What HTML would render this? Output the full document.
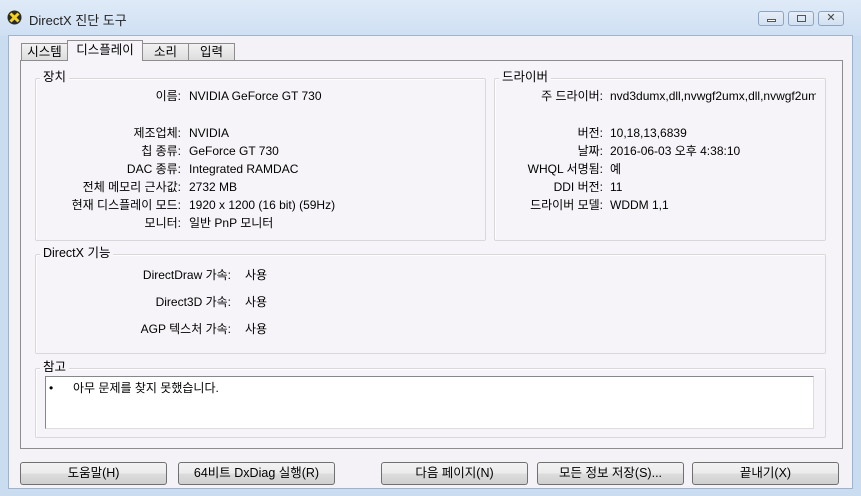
<!DOCTYPE html>
<html><head><meta charset="utf-8"><style>
*{margin:0;padding:0;box-sizing:border-box}
body{width:861px;height:496px;overflow:hidden;background:#c9dcf0;font-family:"Liberation Sans","Noto Sans CJK KR","NanumGothic",sans-serif;font-size:12px;color:#000;position:relative}
.a{position:absolute}
#title{left:0;top:0;width:861px;height:36px;background:linear-gradient(#dfeaf7,#cfe0f3);}
#client{left:8px;top:35px;width:845px;height:454px;background:#f4f2f7;border:1px solid #9fb3cc}
.tab{position:absolute;top:43px;height:18px;border:1px solid #8d8d8d;border-bottom:none;background:linear-gradient(#f2f2f2,#dcdcdc);text-align:center;line-height:16px;font-size:12.5px}
#panel{left:20px;top:60px;width:823px;height:389px;border:1px solid #8d8d8d;background:#f6f4f8}
.grp{position:absolute;border:1px solid #d9d7dc;box-shadow:inset 1px 1px 0 #fff;border-radius:2px}
.gl{position:absolute;background:#f6f4f8;padding:0 3px;line-height:14px;font-size:12.5px}
.r{position:absolute;text-align:right;white-space:nowrap;line-height:14px}
.v{position:absolute;white-space:nowrap;line-height:14px}
.btn{position:absolute;top:462px;height:23px;border:1px solid #707070;border-radius:3px;background:linear-gradient(#f2f2f2 0,#ebebeb 50%,#dddddd 51%,#cfcfcf 100%);text-align:center;line-height:21px;font-size:12.5px}
.wb{position:absolute;top:11px;width:26px;height:15px;border:1px solid #8ea4c0;border-radius:3px;background:linear-gradient(#e6eef8,#d2e0f0)}
</style></head><body>
<div class="a" id="title"></div>
<svg class="a" style="left:7px;top:10px" width="15" height="15" viewBox="0 0 15 15"><circle cx="7.5" cy="7.5" r="7" fill="#2a2a2a"/><path d="M3.5 3.5L11.5 11.5M11.5 3.5L3.5 11.5" stroke="#f3d21c" stroke-width="3"/></svg>
<div class="a" style="left:29px;top:10px;font-size:13px;color:#222">DirectX 진단 도구</div>
<div class="wb" style="left:758px"><div class="a" style="left:8px;top:7px;width:9px;height:3px;border:1px solid #555;background:#fff"></div></div>
<div class="wb" style="left:788px"><div class="a" style="left:8px;top:3px;width:9px;height:7px;border:1px solid #555"></div></div>
<div class="wb" style="left:818px;font-size:11px;text-align:center;line-height:13px;color:#444">✕</div>
<div class="a" id="client"></div>
<div class="tab" style="left:21px;width:47px">시스템</div>
<div class="tab" style="left:142px;width:47px">소리</div>
<div class="tab" style="left:188px;width:47px">입력</div>
<div class="a" id="panel"></div>
<div class="tab" style="left:67px;top:40px;width:76px;height:21px;background:#f6f4f8;z-index:2;line-height:19px">디스플레이</div>

<div class="grp" style="left:35px;top:78px;width:451px;height:163px"></div>
<div class="gl" style="left:40px;top:70px">장치</div>
<div class="grp" style="left:494px;top:78px;width:332px;height:163px"></div>
<div class="gl" style="left:499px;top:70px">드라이버</div>
<div class="grp" style="left:35px;top:254px;width:791px;height:100px"></div>
<div class="gl" style="left:40px;top:246px">DirectX 기능</div>
<div class="grp" style="left:35px;top:368px;width:791px;height:70px"></div>
<div class="gl" style="left:40px;top:360px">참고</div>
<div class="a" style="left:45px;top:376px;width:769px;height:53px;background:#fff;border:1px solid #828790;border-right-color:#ddd;border-bottom-color:#ddd"></div>
<div class="v" style="left:49px;top:381px">•</div>
<div class="v" style="left:73px;top:381px">아무 문제를 찾지 못했습니다.</div>

<div class="r" style="right:680px;top:89px">이름:</div><div class="v" style="left:189px;top:89px">NVIDIA GeForce GT 730</div>
<div class="r" style="right:680px;top:126px">제조업체:</div><div class="v" style="left:189px;top:126px">NVIDIA</div>
<div class="r" style="right:680px;top:144px">칩 종류:</div><div class="v" style="left:189px;top:144px">GeForce GT 730</div>
<div class="r" style="right:680px;top:162px">DAC 종류:</div><div class="v" style="left:189px;top:162px">Integrated RAMDAC</div>
<div class="r" style="right:680px;top:180px">전체 메모리 근사값:</div><div class="v" style="left:189px;top:180px">2732 MB</div>
<div class="r" style="right:680px;top:198px">현재 디스플레이 모드:</div><div class="v" style="left:189px;top:198px">1920 x 1200 (16 bit) (59Hz)</div>
<div class="r" style="right:680px;top:216px">모니터:</div><div class="v" style="left:189px;top:216px">일반 PnP 모니터</div>

<div class="r" style="right:258px;top:89px">주 드라이버:</div><div class="v" style="left:610px;top:89px;width:206px;overflow:hidden">nvd3dumx,dll,nvwgf2umx,dll,nvwgf2umx</div>
<div class="r" style="right:258px;top:126px">버전:</div><div class="v" style="left:610px;top:126px">10,18,13,6839</div>
<div class="r" style="right:258px;top:144px">날짜:</div><div class="v" style="left:610px;top:144px">2016-06-03 오후 4:38:10</div>
<div class="r" style="right:258px;top:162px">WHQL 서명됨:</div><div class="v" style="left:610px;top:162px">예</div>
<div class="r" style="right:258px;top:180px">DDI 버전:</div><div class="v" style="left:610px;top:180px">11</div>
<div class="r" style="right:258px;top:198px">드라이버 모델:</div><div class="v" style="left:610px;top:198px">WDDM 1,1</div>

<div class="r" style="right:630px;top:268px">DirectDraw 가속:</div><div class="v" style="left:245px;top:268px">사용</div>
<div class="r" style="right:630px;top:295px">Direct3D 가속:</div><div class="v" style="left:245px;top:295px">사용</div>
<div class="r" style="right:630px;top:322px">AGP 텍스처 가속:</div><div class="v" style="left:245px;top:322px">사용</div>

<div class="btn" style="left:20px;width:147px">도움말(H)</div>
<div class="btn" style="left:178px;width:157px">64비트 DxDiag 실행(R)</div>
<div class="btn" style="left:381px;width:147px">다음 페이지(N)</div>
<div class="btn" style="left:537px;width:147px">모든 정보 저장(S)...</div>
<div class="btn" style="left:692px;width:147px">끝내기(X)</div>
</body></html>
